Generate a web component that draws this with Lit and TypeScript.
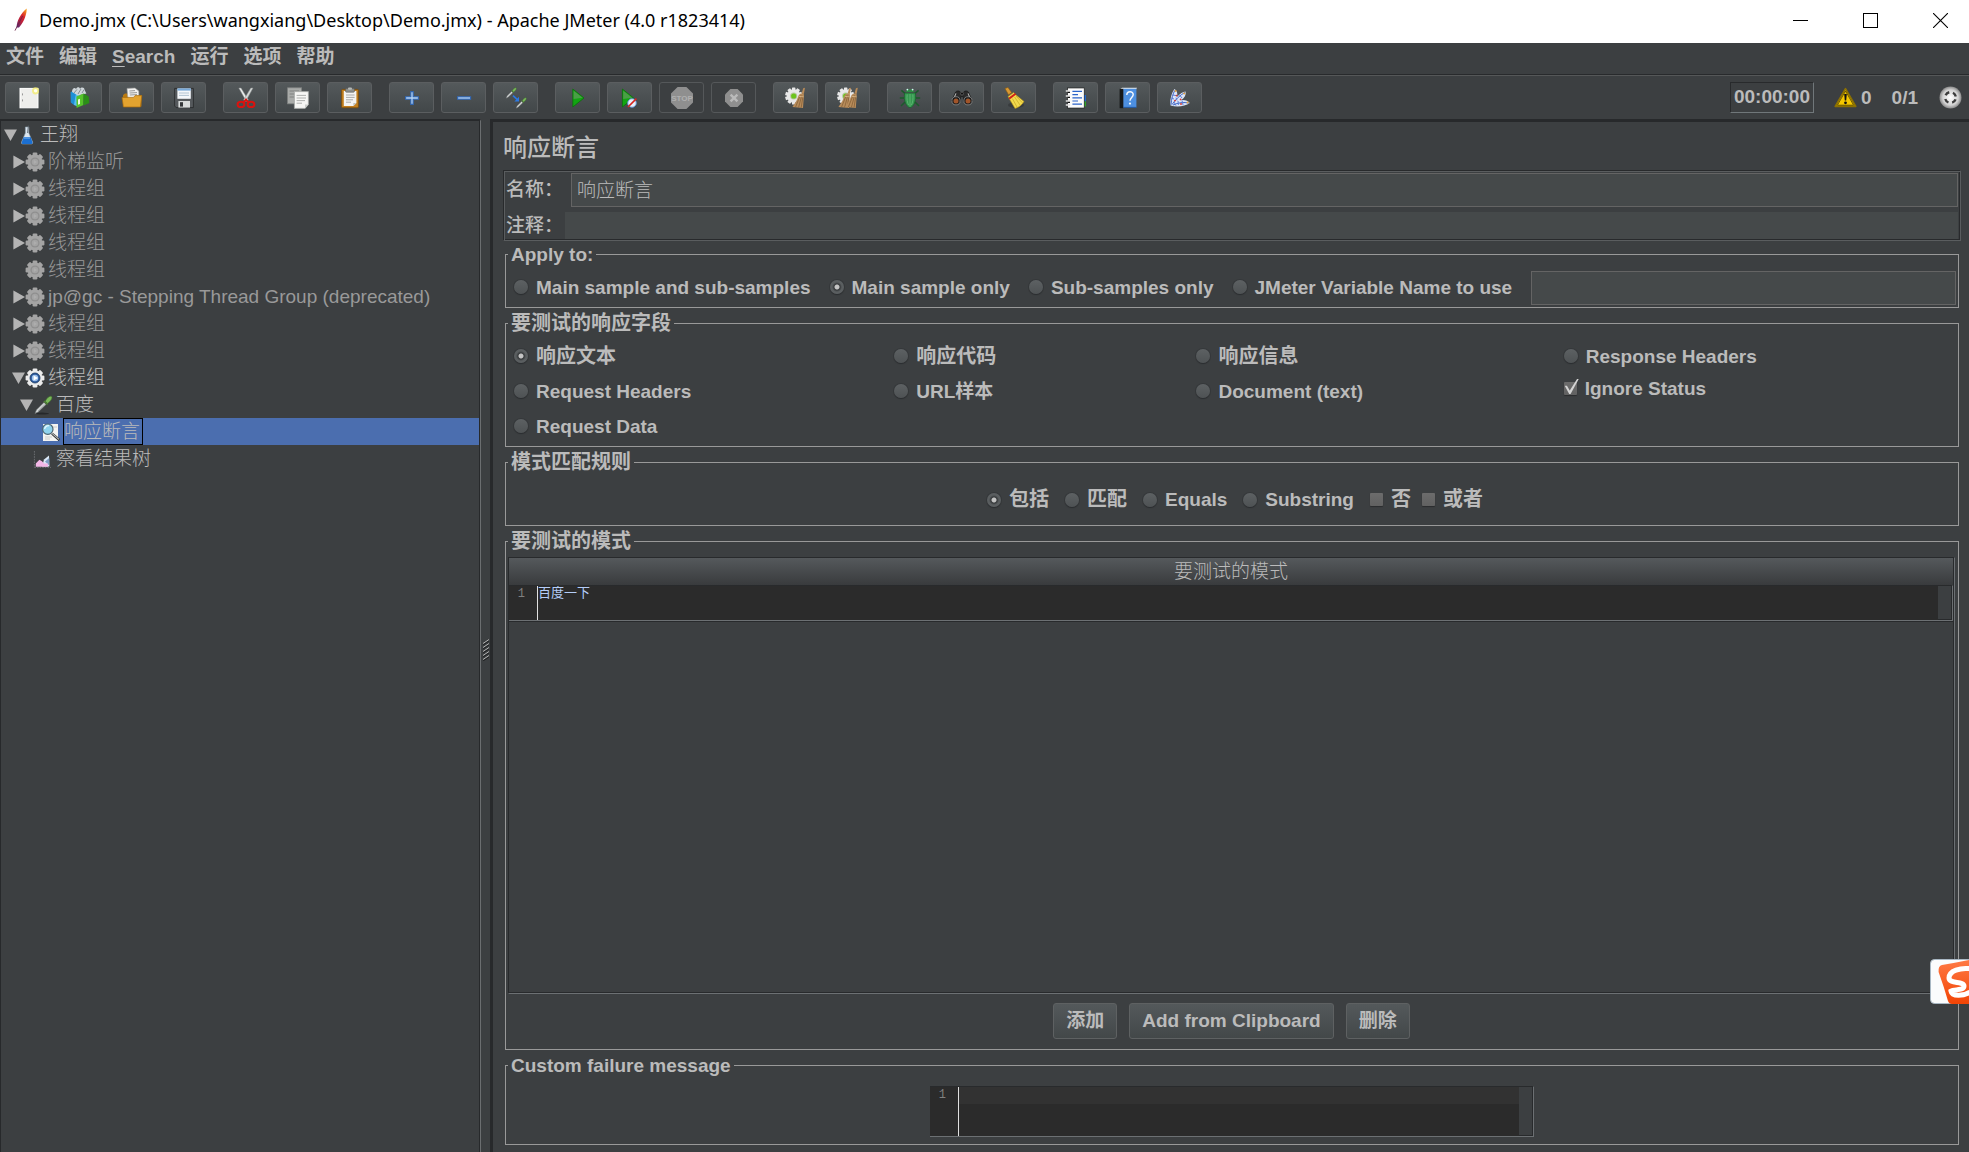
import { LitElement, html, svg, css, nothing, TemplateResult } from "lit";
import { customElement, state } from "lit/decorators.js";
import { classMap } from "lit/directives/class-map.js";

const gearTeeth = Array.from({ length: 10 }, (_, i) => i * 36);

const gear = (cls: string, play: boolean) => svg`
  <g class=${cls}>
    ${gearTeeth.filter((_, i) => i < 8).map((_, i) => svg`<rect x="7.6" y="0.6" width="4.8" height="4.4" rx="1.2" transform="rotate(${i * 45} 10 10)"></rect>`)}
    <circle cx="10" cy="10" r="7.4"></circle>
  </g>
  ${play
    ? svg`<circle cx="10" cy="10" r="5" fill="#2c5a9e" stroke="#17365f" stroke-width="0.8"></circle>
        <circle cx="10" cy="10" r="3.2" fill="#9cc0ea"></circle>
        <path d="M8.6 7.4 L13 10 L8.6 12.6 Z" fill="#ffffff"></path>`
    : svg`<circle cx="10" cy="10" r="4.6" fill="#8f8f8f"></circle>
        <circle cx="10" cy="10" r="3.2" fill="#a3a3a3"></circle>
        <path d="M8.8 8 L12 10 L8.8 12 Z" fill="#adadad"></path>`}`;

const dropper = svg`
  <path d="M2 18.6 L3.4 15 L11 7.4 L13 9.4 L5.4 16.8 Z" fill="#e9ecec" stroke="#6a6e6e" stroke-width="0.7"></path>
  <path d="M4.6 16.2 L11.4 9.2" stroke="#8c9292" stroke-width="0.9"></path>
  <path d="M10.4 6.4 L14 10 L15 9 L11.4 5.4 Z" fill="#4d7f34"></path>
  <path d="M12.2 6.2 C13.5 3.5 16 0.8 18.2 1.2 C19.8 2 19 5 14.6 8.4 Z" fill="#79b75a" stroke="#3f7228" stroke-width="0.6"></path>`;

const wheel = svg`
  ${gearTeeth.map((a) => svg`<rect x="7" y="0.4" width="3.4" height="4.4" rx="0.6" fill="#e8e8e8" transform="rotate(${a} 8.7 9)"></rect>`)}
  <circle cx="8.7" cy="9" r="6.8" fill="#e8e8e8"></circle>
  <circle cx="8.7" cy="9" r="3.6" fill="#b9c7a4"></circle>
  <circle cx="8.7" cy="9" r="2.6" fill="#6cc41c"></circle>`;

const broomStick = (dx: number) => svg`
  <g transform="translate(${dx} 0)">
    <path d="M18.2 1.2 L20 0.8 L18.8 7 L16.6 6.4 Z" fill="#b98b58"></path>
    <path d="M13.8 8 C15.6 6.2 18 6.2 19 7.6 L18 21 L7.4 20 Q12 14 13.8 8 Z" fill="#b88c5b"></path>
    <path d="M15.2 8.4 L10.6 20 M16.8 8.4 L13.6 20.4 M18 9 L16.2 20.6" stroke="#7f5a32" stroke-width="0.7" fill="none"></path>
    <path d="M14 9.4 L18.8 9.8" stroke="#e0bd8d" stroke-width="0.8"></path>
  </g>`;

const TOOL_ICONS: Record<string, TemplateResult> = {
  new: svg`
    <rect x="3" y="1.4" width="18" height="19.4" fill="#eeeeec" stroke="#ffffff" stroke-width="1"></rect>
    <rect x="5" y="6.4" width="1" height="2" fill="#999"></rect><rect x="5" y="12.4" width="1" height="2" fill="#999"></rect>
    <circle cx="18.6" cy="3.8" r="3.6" fill="#f4ec6a" opacity="0.75"></circle><circle cx="18.6" cy="3.8" r="1.7" fill="#fffff0"></circle>`,
  templates: svg`
    <path d="M1.6 5 L7 3.4 L7 17 L5 18 L1.8 15.6 Z" fill="#1e90d6"></path><path d="M7 6 L12 8 L9.6 20 L5 18 Z" fill="#59bdf2"></path>
    <path d="M3 5 C3 1 6 0 7 2 C8 -0.6 11 0 11 2 C12 -0.2 15.6 0 15.6 3 L17.4 6.6 L9 8.6 Z" fill="#cfd6da"></path>
    <path d="M5 6 L8 2.4 M9 7 L12 2 M13 6 L15 2.6" stroke="#7d878d" stroke-width="0.9"></path>
    <path d="M7.4 9.6 L14.6 6.4 L14.4 18 L7.6 21 Z" fill="#55c42a"></path><path d="M14.6 6.4 L19.6 9.4 L20.4 16 L14.4 18.4 Z" fill="#2b8f17"></path>
    <path d="M9 12.6 L11 11.8 V17 L9 17.8 Z" fill="#e9f7df"></path>`,
  open: svg`
    <path d="M2 8 L4 6.4 L8 6.4 L9 8 L20.4 8 L20.4 19.6 L2 19.6 Z" fill="#b97a12"></path>
    <path d="M6 1.4 L14 1 L17.8 4 L18 13 L7 13 Z" fill="#f2f2f0" stroke="#9b9b98" stroke-width="0.6"></path>
    <path d="M8.4 4 L14 3.6 M8.6 6 L16 5.6 M8.8 8 L16 7.6" stroke="#8c8c8c" stroke-width="0.9"></path>
    <path d="M1 10.4 L12.6 10.4 L14 8.6 L20.8 8.6 L19.4 20 L2.4 20 Z" fill="#e3a32f" stroke="#a96c0b" stroke-width="0.7"></path>`,
  save: svg`
    <path d="M1.6 1.4 L20.4 1.4 L20.4 20.6 L3.2 20.6 L1.6 19 Z" fill="#55595c" stroke="#2a2c2e" stroke-width="0.9"></path>
    <rect x="4.4" y="1.4" width="13.4" height="10.4" fill="#f4f7fa"></rect><rect x="4.4" y="1.4" width="13.4" height="2.2" fill="#78a9d8"></rect>
    <path d="M6 6 H16 M6 8.4 H16" stroke="#a9bccd" stroke-width="0.9"></path>
    <rect x="5.4" y="14" width="11.6" height="6.6" fill="#d9dcdc"></rect><rect x="7" y="15.2" width="3" height="4.4" fill="#34373a"></rect>`,
  cut: svg`
    <path d="M3.8 1 L6 1 L13.4 13 L11.4 14.6 Z" fill="#e9eceb" stroke="#8b8f8f" stroke-width="0.5"></path>
    <path d="M18 1 L15.8 1 L8.6 13 L10.6 14.6 Z" fill="#d5d9d8" stroke="#8b8f8f" stroke-width="0.5"></path>
    <ellipse cx="6" cy="17.4" rx="3.4" ry="2.6" fill="none" stroke="#d9130f" stroke-width="2"></ellipse>
    <ellipse cx="16" cy="17.4" rx="3.4" ry="2.6" fill="none" stroke="#d9130f" stroke-width="2"></ellipse>
    <path d="M8.4 15.6 L11 12.6 L13.6 15.6" fill="none" stroke="#d9130f" stroke-width="2"></path>`,
  copy: svg`
    <rect x="0.6" y="0.8" width="14" height="16" fill="#a9aba9" stroke="#7f8280" stroke-width="0.8"></rect>
    <path d="M2.6 4 H12 M2.6 7 H12 M2.6 10 H7" stroke="#7b7e7c" stroke-width="0.9"></path>
    <path d="M7.4 4.6 H21.4 V17.6 L18 21.4 H7.4 Z" fill="#f6f6f4" stroke="#a3a6a3" stroke-width="0.8"></path>
    <path d="M9.6 8.4 H19 M9.6 11 H19 M9.6 13.6 H18 M9.6 16.2 H15" stroke="#a5a7a5" stroke-width="0.9"></path>
    <path d="M21.4 17.6 H18 V21.4 Z" fill="#c9cbc9"></path>`,
  paste: svg`
    <rect x="2.6" y="2.4" width="16.8" height="18.4" rx="1" fill="#c27f1e" stroke="#7c4c09" stroke-width="0.8"></rect>
    <path d="M4.8 4 H17.4 V16 L14.4 19 H4.8 Z" fill="#f4f4f2"></path>
    <path d="M7 8 H15.6 M7 10.4 H15.6 M7 12.8 H14 M7 15.2 H12" stroke="#a0a2a0" stroke-width="0.9"></path>
    <path d="M17.4 16 H14.4 V19 Z" fill="#bdbfbd"></path>
    <rect x="6.6" y="1.6" width="8.8" height="3.6" rx="0.8" fill="#8d908d" stroke="#595b59" stroke-width="0.6"></rect><rect x="9" y="0.4" width="4" height="2.4" rx="1" fill="#b5b8b5"></rect>`,
  plus: svg`<path d="M9.8 4.6 H12.2 V9.8 H17.4 V12.2 H12.2 V17.4 H9.8 V12.2 H4.6 V9.8 H9.8 Z" fill="#b4d3f5" stroke="#2f65b3" stroke-width="1.1"></path>`,
  minus: svg`<rect x="4.6" y="9.8" width="13" height="2.4" fill="#b4d3f5" stroke="#2f65b3" stroke-width="1.1"></rect>`,
  toggle: svg`
    <g transform="translate(0 0) scale(0.6)">${dropper}</g><g transform="translate(10 10) scale(0.6)">${dropper}</g>
    <path d="M8 8.6 L12.4 12.6" stroke="#2b78e4" stroke-width="1.6"></path><path d="M14 9.8 V14.4 H9.4 Z" fill="#2b78e4"></path>`,
  start: svg`<path d="M5.8 2 L17 11 L5.8 20 Z" fill="#12a512" stroke="#0c6e0c" stroke-width="0.8"></path><path d="M6.6 3.8 L15.6 10.8 L6.6 12 Z" fill="#4a9e46"></path>`,
  startNoPause: svg`
    <path d="M3.4 2 L14.6 11 L3.4 20 Z" fill="#12a512" stroke="#0c6e0c" stroke-width="0.8"></path><path d="M4.2 3.8 L13.2 10.8 L4.2 12 Z" fill="#4a9e46"></path>
    <circle cx="13" cy="16" r="4.3" fill="#e8f0fa" stroke="#5d8fcd" stroke-width="1"></circle><path d="M9 20 L17.4 11.6" stroke="#d8231d" stroke-width="1.6"></path>`,
  stop: svg`<path d="M6.6 0 H15.4 L22 6.6 V15.4 L15.4 22 H6.6 L0 15.4 V6.6 Z" fill="#8f8f8f"></path>
    <text x="11" y="14" text-anchor="middle" class="stop-word">STOP</text>`,
  shutdown: svg`<path d="M7.4 2 H14.6 L20 7.4 V14.6 L14.6 20 H7.4 L2 14.6 V7.4 Z" fill="#8f8f8f"></path>
    <path d="M7.6 7.6 L14.4 14.4 M14.4 7.6 L7.6 14.4" stroke="#bababa" stroke-width="2.4"></path>`,
  clear: svg`${wheel}${broomStick(0)}`,
  clearAll: svg`${wheel}${broomStick(-6)}${broomStick(0.8)}`,
  bug: svg`
    <path d="M6 6.4 L2.4 3.4 M16 6.4 L19.6 3.4 M5.4 11 H0.8 M16.6 11 H21.2 M6 15 L2 19 M16 15 L20 19" stroke="#1c5a2b" stroke-width="1.5" fill="none"></path>
    <path d="M7 5 C7 1.4 15 1.4 15 5 Z" fill="#2d8a44"></path><circle cx="8.4" cy="2.6" r="0.9" fill="#cfe"></circle><circle cx="13.6" cy="2.6" r="0.9" fill="#cfe"></circle>
    <path d="M5.6 6 H16.4 C17.6 14 14.6 20 11 20.6 C7.4 20 4.4 14 5.6 6 Z" fill="#34994f" stroke="#1c5f2e" stroke-width="0.8"></path>
    <path d="M11 7 V19.6 M8.2 7.4 C7.6 12 8.4 16 9.6 18 M13.8 7.4 C14.4 12 13.6 16 12.4 18" stroke="#67b87a" stroke-width="0.8" fill="none"></path>`,
  search: svg`
    <path d="M4.6 5 C6 3.4 8.6 3.6 9.4 5.4 L12.6 5.4 C13.4 3.6 16 3.4 17.4 5 L21.4 14 L13 15 L12 9.4 H10 L9 15 L0.6 14 Z" fill="#2b2b2b" stroke="#111" stroke-width="0.6"></path>
    <path d="M5 6.4 L3 11 M17 6.4 L19 11" stroke="#b4b4b4" stroke-width="1.1"></path><circle cx="11" cy="6.6" r="1.5" fill="#111" stroke="#777" stroke-width="0.6"></circle>
    <circle cx="5" cy="13.8" r="4.1" fill="#1c1c1c" stroke="#8c8c8c" stroke-width="0.8"></circle><circle cx="17" cy="13.8" r="4.1" fill="#1c1c1c" stroke="#8c8c8c" stroke-width="0.8"></circle>
    <circle cx="5" cy="14" r="2.5" fill="#a1552a"></circle><circle cx="17" cy="14" r="2.5" fill="#a1552a"></circle>`,
  reset: svg`
    <ellipse cx="13" cy="18" rx="8" ry="3" fill="#2a2c2d" opacity="0.5"></ellipse>
    <path d="M2 1.6 L5 0.4 L8.6 5.6 L5.6 7.8 Z" fill="#d99a34" stroke="#8f5d10" stroke-width="0.6"></path>
    <path d="M5 9.6 L10.6 5.4 L13.6 8.4 L21 14.4 C19 18 15.4 20.6 12 21.4 L7 13 Z" fill="#f2d94e" stroke="#b08f14" stroke-width="0.6"></path>
    <path d="M9.4 11.6 L14 20 M11.6 10 L17 18 M13 9 L19.4 15.8" stroke="#c6a622" stroke-width="0.7"></path>
    <path d="M5.6 10.8 L12 6 L13.2 7.4 L6.6 12.4 Z" fill="#cf2118"></path>`,
  functions: svg`
    <rect x="15" y="8" width="6" height="6.6" fill="#2068cf"></rect><rect x="15" y="14.4" width="6" height="5" fill="#2e9f28"></rect>
    <rect x="2.6" y="1" width="16.6" height="20" fill="#fbfbfb" stroke="#111" stroke-width="0.6"></rect>
    <path d="M7.4 4.4 H17 M7.4 7.6 H13 M7.4 10.8 H17 M7.4 14 H13 M7.4 17.2 H17" stroke="#2a63c9" stroke-width="1.2"></path>
    <path d="M0.8 4 H5 M0.8 9 H5 M0.8 14 H5 M0.8 18 H5" stroke="#e2e2e2" stroke-width="1.6"></path><path d="M2.8 5.4 H5 M2.8 10.4 H5 M2.8 15.4 H5" stroke="#111" stroke-width="1.2"></path>`,
  help: svg`
    <path d="M2.6 2.4 L5 0.8 H20 L19 2.4 Z" fill="#dfe5ea"></path><rect x="2.6" y="1.8" width="4" height="19.4" fill="#17191b"></rect>
    <rect x="6.4" y="1.8" width="13" height="18.6" fill="#4d8fe0"></rect><path d="M6.4 20.4 H19.4" stroke="#2359a3" stroke-width="1"></path>
    <path d="M9.8 8 C9.8 3.6 16.4 3.6 16.2 7.8 C16 10.4 13 10.8 13 13.8" fill="none" stroke="#f2f7fd" stroke-width="1.5"></path><circle cx="13" cy="16.6" r="1.1" fill="#f2f7fd"></circle>`,
  sourceTree: svg`
    <path d="M1.6 18.4 C0.6 13 2.6 6 5.4 2 C8.4 4 8.8 7 8 10 C11 6.6 14 4.8 16.6 4.6 C17.2 8 15.6 11 12.4 13 C16 12.6 19 13.6 20.8 16 C16 19.4 8 20.4 1.6 18.4 Z" fill="#dbe4f7"></path>
    <path d="M2 17.6 C2.4 12 4 6.6 5.8 3.4 M3 17.6 C6 13 11 8 16 5.4 M4 18 C9 15.6 15 15 20 16" stroke="#3f66c4" stroke-width="1" fill="none"></path>
    <path d="M2.4 11 L5 12 M3.6 8 L7.4 8.6 M7 10.6 L8 13.4 M10.4 7.8 L13 11 M9 14 L9.4 18 M13 13.4 L14 18 M5 15 L7 18.6" stroke="#5c7fd6" stroke-width="1"></path>
    <circle cx="6.6" cy="4" r="1" fill="#e8a33a"></circle><circle cx="15.2" cy="6.6" r="1" fill="#e8a33a"></circle><circle cx="18.6" cy="15.4" r="1" fill="#e8a33a"></circle>
    <circle cx="7.6" cy="8.6" r="0.9" fill="#d8372e"></circle><circle cx="11.6" cy="12.4" r="0.9" fill="#d8372e"></circle><circle cx="12" cy="17" r="0.9" fill="#d8372e"></circle><circle cx="6" cy="13.6" r="0.9" fill="#d8372e"></circle>`,
};

const TREE_ICONS: Record<string, TemplateResult> = {
  plan: svg`
    <path d="M8.4 2 H11.8 V8 L15.6 17 C16 18.6 15 19 14 19 H6 C5 19 4 18.6 4.6 17 L8.4 8 Z" fill="#dce6ef" stroke="#8fa1b0" stroke-width="0.6"></path>
    <path d="M6.8 12 H13.6 L15.4 17 C15.8 18.4 15 19 14 19 H6 C5 19 4.4 18.4 4.8 17 Z" fill="#1b6fd1"></path>
    <path d="M7 13 H13" stroke="#7fb5ee" stroke-width="1"></path><path d="M11.4 0.6 L10.6 8" stroke="#59636b" stroke-width="0.9"></path>`,
  gearOff: gear("gear-off", false),
  gearOn: gear("gear-on", true),
  sampler: svg`<ellipse cx="9" cy="18.6" rx="7" ry="1" fill="#26282a"></ellipse>${dropper}`,
  assertion: svg`
    <rect x="2" y="2" width="15" height="17" fill="#f4f4f2"></rect><path d="M12 5 H16 M4 15 H11 M4 17 H9" stroke="#c9c9c6" stroke-width="0.9"></path>
    <path d="M11 11.6 L18.4 18" stroke="#2b2d2e" stroke-width="2.4"></path><path d="M11 11.4 L18 17.4" stroke="#b9bdbd" stroke-width="1.1"></path>
    <circle cx="6.8" cy="7.2" r="5.2" fill="#8fd3ee" stroke="#4f6571" stroke-width="1.2"></circle><path d="M3.6 7 C4 4.6 6 3.4 8 3.8" stroke="#e6f8ff" stroke-width="1.3" fill="none"></path>`,
  results: svg`
    <path d="M1.4 2 V18.4 M1.4 18.4 H18" stroke="#6f7376" stroke-width="0.9" stroke-dasharray="1.6 1"></path>
    <path d="M9 17.6 L11 10.4 L16 6.6 L16.4 17.6 Z" fill="#dce9f6"></path><path d="M12 12.6 L16.2 9 V16.6 Z" fill="#7d9cc4"></path>
    <path d="M2.8 17.8 V14.4 L6.4 10.8 L9 12.2 L11 14.6 H15 V17.8 Z" fill="#f2b6e6"></path>`,
};

interface Node { id: string; text: string; depth: number; icon: string; open?: boolean; off?: boolean }

const NODES: Node[] = [
  { id: "n0", text: "王翔", depth: 0, icon: "plan", open: true },
  { id: "n1", text: "阶梯监听", depth: 1, icon: "gearOff", open: false, off: true },
  { id: "n2", text: "线程组", depth: 1, icon: "gearOff", open: false, off: true },
  { id: "n3", text: "线程组", depth: 1, icon: "gearOff", open: false, off: true },
  { id: "n4", text: "线程组", depth: 1, icon: "gearOff", open: false, off: true },
  { id: "n5", text: "线程组", depth: 1, icon: "gearOff", off: true },
  { id: "n6", text: "jp@gc - Stepping Thread Group (deprecated)", depth: 1, icon: "gearOff", open: false, off: true },
  { id: "n7", text: "线程组", depth: 1, icon: "gearOff", open: false, off: true },
  { id: "n8", text: "线程组", depth: 1, icon: "gearOff", open: false, off: true },
  { id: "n9", text: "线程组", depth: 1, icon: "gearOn", open: true },
  { id: "n10", text: "百度", depth: 2, icon: "sampler", open: true },
  { id: "n11", text: "响应断言", depth: 3, icon: "assertion" },
  { id: "n12", text: "察看结果树", depth: 2, icon: "results" },
];

const TOOLS: [string, string][][] = [
  [["new", "New"], ["templates", "Templates"], ["open", "Open"], ["save", "Save"]],
  [["cut", "Cut"], ["copy", "Copy"], ["paste", "Paste"]],
  [["plus", "Expand all"], ["minus", "Collapse all"], ["toggle", "Toggle"]],
  [["start", "Start"], ["startNoPause", "Start no pauses"], ["stop", "Stop"], ["shutdown", "Shutdown"]],
  [["clear", "Clear"], ["clearAll", "Clear all"]],
  [["bug", "Debug"], ["search", "Search"], ["reset", "Reset search"]],
  [["functions", "Function helper"], ["help", "Help"], ["sourceTree", "What's this node"]],
];

@customElement("app-root")
export class AppRoot extends LitElement {
  @state() private selected = "n11";

  static styles = css`
    :host {
      display: flex;
      flex-direction: column;
      position: relative;
      min-height: 100vh;
      overflow: hidden;
      background: #3c3f41;
      color: #bbbbbb;
      font: 19px/23px "Liberation Sans", "Noto Sans CJK SC", sans-serif;
    }
    * { box-sizing: border-box; }
    button, input, textarea { font: inherit; color: inherit; margin: 0; }
    svg { display: block; flex: none; }

    .titlebar { display: flex; align-items: center; height: 43px; padding-left: 10px; background: #ffffff; color: #000000; }
    .app-name { flex: 1; margin: 0 0 4px 7px; font: 18px/24px "Noto Sans", "Open Sans", sans-serif; white-space: nowrap; }
    .win { display: flex; align-items: center; justify-content: center; width: 70px; height: 43px; padding: 0 0 2px; border: 0; background: none; }
    .win:last-child { width: 64px; padding-left: 7px; }

    .menubar { display: flex; gap: 15px; height: 32px; padding: 1px 6px 0; border-bottom: 1px solid #282a2c; }
    .menubar button { height: 26px; padding: 0; border: 0; background: none; font-weight: bold; line-height: 24px; }
    .menubar u { text-underline-offset: 3px; }

    .toolbar { display: flex; align-items: center; height: 44px; padding: 0 7px 0 5px; border-top: 1px solid #555758; }
    .group { display: flex; gap: 7px; margin-right: 17px; }
    .tool { display: flex; align-items: center; justify-content: center; width: 45px; height: 31px; padding: 0; border: 1px solid #5b5e60; border-radius: 3px; background: linear-gradient(#54595b, #424749); }
    .tool:disabled { background: none; border-color: #55585a; }
    .stop-word { font: bold 8px "Liberation Sans", sans-serif; fill: #b0b0b0; }
    .status { display: flex; align-items: center; margin-left: auto; font-weight: bold; }
    .timer { height: 31px; padding: 2px 3px 0; border: 1px solid #282a2c; border-right-color: #70777a; border-bottom-color: #70777a; line-height: 24px; }
    .warn { display: flex; align-items: center; gap: 4px; margin: 0 20px; padding: 0; border: 0; background: none; font-weight: bold; }
    .threads { margin-right: 21px; }

    .body { display: flex; flex: 1; }
    .tree { width: 481px; flex: none; border: solid; border-width: 2px 1px 0 1px; border-color: #27292b #6b6e70 #27292b #27292b; box-shadow: inset -1px 0 #27292b; }
    .tree ul { margin: 0; padding: 0 1px 0 0; list-style: none; }
    .node { display: flex; align-items: center; width: 100%; height: 27px; padding: 0; border: 0; background: none; text-align: left; }
    .depth-0 { padding-left: 3px; }
    .depth-1 { padding-left: 11px; }
    .depth-2 { padding-left: 19px; }
    .depth-3 { padding-left: 27px; }
    .node-text { height: 27px; margin-left: 2px; padding-right: 2px; border: 1px solid transparent; line-height: 25px; font-weight: 300; white-space: nowrap; }
    .off { color: #999999; }
    .selected { background: #4b6eaf; }
    .selected .node-text { border-color: #000000; }
    .gear-off { fill: #a4a4a4; }
    .gear-on { fill: #ececec; }

    .splitter { display: flex; align-items: center; justify-content: center; width: 9px; flex: none; padding-top: 28px; }
    .panel { display: flex; flex-direction: column; flex: 1; min-width: 0; padding: 12px 8px 7px 10px; border: solid #27292b; border-width: 3px 0 0 3px; }
    h1 { margin: 0 0 12px; font: 500 24px/24px "Noto Sans CJK SC", sans-serif; }

    .form { display: grid; grid-template-columns: 57px 1fr; align-items: center; margin-bottom: 2px; border: 1px solid #282a2c; border-right-color: #5a5d5f; border-bottom-color: #5a5d5f; box-shadow: inset 1px 1px #5a5d5f, inset -1px -1px #282a2c; padding: 2px 2px 1px; font-weight: 500; }
    .form label { padding-bottom: 2px; white-space: nowrap; }
    .form input + label { padding: 4px 0 0; }
    .form input, .variable { height: 34px; border: 1px solid #646464; background: #45494a; padding: 0 5px 3px; border-radius: 0; font-weight: 300; outline: none; min-width: 0; }
    .form .name { margin-left: 8px; }
    .form .comment { height: 27px; margin-top: 5px; margin-left: 2px; border: 0; }

    fieldset { min-width: 0; margin: 0 2px 4px; padding: 0 2px 2px 8px; border: 1px solid #999999; font-weight: bold; }
    legend { margin-left: -6px; padding: 0 3px; line-height: 23px; }
    .han { font-size: 20px; }
    .choice { display: flex; align-items: center; gap: 8px; white-space: nowrap; }
    input[type="radio"], input[type="checkbox"] { appearance: none; flex: none; position: relative; width: 14px; height: 14px; margin: 0; border-radius: 50%; background: linear-gradient(#5d6163, #4e5254); box-shadow: 0 1px 1px #2c2e30, 0 0 0 1px #36393b; }
    input[type="radio"]:checked { background: radial-gradient(circle, #c4c4c4 0 2px, #35383a 3px, #5a5e60 5px); }
    input[type="checkbox"] { width: 13px; height: 13px; border-radius: 1px; background: linear-gradient(#6c6c6c, #616161); box-shadow: 0 1px 1px #2a2c2e; }
    input[type="checkbox"]:checked::before { content: ""; position: absolute; left: 1px; top: -3px; width: 14px; height: 15px; background: #d4d4d4; clip-path: polygon(0 45%, 16% 45%, 36% 76%, 88% 0, 100% 0, 42% 100%, 32% 100%); }

    .apply { display: flex; gap: 19px; padding-top: 5px; }
    .apply .choice { height: 32px; }
    .variable { flex: 1; }
    .fields { display: grid; grid-template-columns: 380fr 302fr 367fr 392fr; padding-top: 4px; }
    .fields .choice { height: 34px; margin-bottom: 1px; }
    .fields .short { height: 29px; }
    .rules { display: flex; justify-content: center; gap: 16px; padding: 14px 0 12px; }
    .pair { display: flex; gap: 11px; }
    .rules .choice { height: 23px; }

    .patterns { display: flex; flex: 1; flex-direction: column; padding: 4px 3px 10px 2px; }
    .patterns legend { margin-left: 0; }
    .scroll { flex: 1; border: 1px solid #282a2c; border-right-color: #6c7073; border-bottom-color: #6c7073; box-shadow: inset -1px -1px #282a2c; padding: 0 1px 1px 0; }
    table { width: 100%; border-collapse: collapse; }
    th { height: 27px; padding: 0; background: linear-gradient(#55595c, #393b3d); line-height: 26px; font-weight: 300; }
    td { padding: 0; border-bottom: 1px solid #282a2c; }
    .editor { display: flex; border: 1px solid #282a2c; border-left: 0; border-right-color: #6c7073; border-bottom-color: #6c7073; background: #2b2b2b; font: 13px/16px "Liberation Mono", "Noto Sans CJK SC", monospace; }
    .gutter { width: 28px; padding: 0 12px 0 0; color: #808080; text-align: right; font-size: 12px; }
    .editor textarea { flex: 1; min-width: 0; height: 34px; padding: 0; border: 0; border-left: 1px solid #e0e0e0; border-radius: 0; outline: none; resize: none; overflow: hidden; background: none; color: #b4cdf8; }
    .track { width: 14px; flex: none; background: #3c3f41; box-shadow: inset -1px -1px #282a2c; }
    .actions { display: flex; justify-content: center; gap: 12px; padding: 9px 0 0; }
    .actions button { height: 36px; padding: 0 12px 2px; border: 1px solid #5e6162; border-radius: 3px; background: linear-gradient(#54595b, #434849); font-weight: bold; }

    .message { display: flex; justify-content: center; margin-bottom: 0; padding: 9px 0 7px; }
    .message legend { margin-left: 2px; }
    .message .editor { width: 604px; }
    .message textarea { height: 49px; background: linear-gradient(#323232 0 17px, #2b2b2b 17px); }
    .ime { position: absolute; right: 0; top: 959px; width: 39px; height: 45px; padding: 0; border: 0; background: none; }
  `;

  private option(group: string, text: string, checked = false, type = "radio", extra = "") {
    const han = !/[A-Za-z]/.test(text);
    return html`<label class=${classMap({ choice: true, han, short: extra === "short" })}><input type=${type} name=${group} ?checked=${checked}>${text}</label>`;
  }

  private node(n: Node) {
    const arrow = n.open === undefined ? nothing
      : n.open ? svg`<path d="M0 1.4 H13 L6.5 13 Z" fill="#b4b4b4"></path>`
      : svg`<path d="M1.4 0.6 V13.4 L13 7 Z" fill="#b4b4b4"></path>`;
    return html`<li role="treeitem" aria-selected=${this.selected === n.id ? "true" : "false"}>
      <button class=${classMap({ node: true, ["depth-" + n.depth]: true, off: !!n.off, selected: this.selected === n.id })}
        @click=${() => { this.selected = n.id; }}>
        <svg width="13" height="14" viewBox="0 0 13 14">${arrow}</svg>
        <svg width="20" height="20" viewBox="0 0 20 20">${TREE_ICONS[n.icon]}</svg>
        <span class="node-text">${n.text}</span>
      </button></li>`;
  }

  render() {
    return html`
      <header class="titlebar">
        <svg width="22" height="28" viewBox="0 0 22 28">
          <defs><linearGradient id="quill" x1="0.8" y1="0" x2="0.2" y2="1"><stop offset="0" stop-color="#f79a1e"></stop><stop offset="0.35" stop-color="#d8262c"></stop><stop offset="0.7" stop-color="#b5203f"></stop><stop offset="1" stop-color="#5f2a70"></stop></linearGradient></defs>
          <path d="M16.6 0.6 C17 5 14.6 13.4 9 19.4 L6.6 19.4 C6.4 14 10.6 5.6 16.6 0.6 Z" fill="url(#quill)"></path>
          <path d="M12.6 8 L5 22.6" stroke="#6c2148" stroke-width="0.9"></path>
        </svg>
        <span class="app-name">Demo.jmx (C:\\Users\\wangxiang\\Desktop\\Demo.jmx) - Apache JMeter (4.0 r1823414)</span>
        <button class="win" aria-label="Minimize"><svg width="15" height="15" viewBox="0 0 15 15"><path d="M0 7.5 H15" stroke="#000"></path></svg></button>
        <button class="win" aria-label="Maximize"><svg width="15" height="15" viewBox="0 0 15 15"><rect x="0.5" y="0.5" width="14" height="14" fill="none" stroke="#000"></rect></svg></button>
        <button class="win" aria-label="Close"><svg width="15" height="15" viewBox="0 0 15 15"><path d="M0 0 L15 15 M15 0 L0 15" stroke="#000" stroke-width="1.1"></path></svg></button>
      </header>
      <nav class="menubar">
        <button>文件</button><button>编辑</button><button><u>S</u>earch</button><button>运行</button><button>选项</button><button>帮助</button>
      </nav>
      <div class="toolbar">
        ${TOOLS.map((g) => html`<div class="group">${g.map(([id, label]) => html`
          <button class="tool" aria-label=${label} ?disabled=${id === "stop" || id === "shutdown"}>
            <svg width="22" height="22" viewBox="0 0 22 22">${TOOL_ICONS[id]}</svg>
          </button>`)}</div>`)}
        <div class="status">
          <span class="timer">00:00:00</span>
          <button class="warn">
            <svg width="23" height="21" viewBox="0 0 23 21"><path d="M11.5 1.6 L21.8 19.4 H1.2 Z" fill="#f5c800" stroke="#8c7000" stroke-width="1.6" stroke-linejoin="round"></path><path d="M11.5 4 L19.6 18.2 H3.4 Z" fill="none" stroke="#3a3000" stroke-width="0.7"></path><path d="M10.2 7 H12.8 L12.2 13.6 H10.8 Z" fill="#111"></path><circle cx="11.5" cy="15.8" r="1.4" fill="#111"></circle></svg>
            0</button>
          <span class="threads">0/1</span>
          <svg width="23" height="23" viewBox="0 0 23 23">
            <defs><radialGradient id="orb"><stop offset="0" stop-color="#ffffff"></stop><stop offset="0.7" stop-color="#d2d2d2"></stop><stop offset="1" stop-color="#8a8a8a"></stop></radialGradient></defs>
            <circle cx="11.5" cy="11.5" r="11" fill="url(#orb)"></circle>
            <circle cx="11.5" cy="11.5" r="5.4" fill="none" stroke="#3c3c3c" stroke-width="2.4" stroke-dasharray="4.6 3.88" stroke-dashoffset="-1.94"></circle>
          </svg>
        </div>
      </div>
      <div class="body">
        <aside class="tree"><ul role="tree">${NODES.map((n) => this.node(n))}</ul></aside>
        <div class="splitter">
          <svg width="8" height="22" viewBox="0 0 8 22">
            ${[0, 4, 8, 12, 16].map((y) => svg`<path d="M1 ${y + 4.5} L7 ${y + 0.5}" stroke="#b0b0b0" stroke-width="1"></path><path d="M1 ${y + 6} L7 ${y + 2}" stroke="#1f2122" stroke-width="1"></path>`)}
          </svg>
        </div>
        <main class="panel">
          <h1>响应断言</h1>
          <div class="form">
            <label for="name">名称：</label><input id="name" class="name" type="text" value="响应断言">
            <label for="comment">注释：</label><input id="comment" class="comment" type="text">
          </div>
          <fieldset class="apply">
            <legend>Apply to:</legend>
            ${this.option("scope", "Main sample and sub-samples")}
            ${this.option("scope", "Main sample only", true)}
            ${this.option("scope", "Sub-samples only")}
            ${this.option("scope", "JMeter Variable Name to use")}
            <input class="variable" type="text" aria-label="JMeter Variable Name">
          </fieldset>
          <fieldset>
            <legend class="han">要测试的响应字段</legend>
            <div class="fields">
              ${this.option("field", "响应文本", true)}
              ${this.option("field", "响应代码")}
              ${this.option("field", "响应信息")}
              ${this.option("field", "Response Headers")}
              ${this.option("field", "Request Headers")}
              ${this.option("field", "URL样本")}
              ${this.option("field", "Document (text)")}
              ${this.option("ignore", "Ignore Status", true, "checkbox", "short")}
              ${this.option("field", "Request Data")}
            </div>
          </fieldset>
          <fieldset>
            <legend class="han">模式匹配规则</legend>
            <div class="rules">
              ${this.option("rule", "包括", true)}
              ${this.option("rule", "匹配")}
              ${this.option("rule", "Equals")}
              ${this.option("rule", "Substring")}
              <div class="pair">
                ${this.option("not", "否", false, "checkbox")}
                ${this.option("or", "或者", false, "checkbox")}
              </div>
            </div>
          </fieldset>
          <fieldset class="patterns">
            <legend class="han">要测试的模式</legend>
            <div class="scroll">
              <table>
                <thead><tr><th scope="col">要测试的模式</th></tr></thead>
                <tbody><tr><td>
                  <div class="editor"><span class="gutter">1</span><textarea aria-label="要测试的模式" .value=${"百度一下"}></textarea><span class="track"></span></div>
                </td></tr></tbody>
              </table>
            </div>
            <div class="actions"><button>添加</button><button>Add from Clipboard</button><button>删除</button></div>
          </fieldset>
          <fieldset class="message">
            <legend>Custom failure message</legend>
            <div class="editor"><span class="gutter">1</span><textarea aria-label="Custom failure message"></textarea><span class="track"></span></div>
          </fieldset>
        </main>
      </div>
      <button class="ime" aria-label="Input method">
        <svg width="39" height="45" viewBox="0 0 39 45">
          <defs><linearGradient id="flame" x1="0" y1="0" x2="0" y2="1"><stop offset="0" stop-color="#ff7a45"></stop><stop offset="1" stop-color="#f24405"></stop></linearGradient></defs>
          <rect x="0.5" y="0.5" width="44" height="44" rx="4" fill="#fbfcfd" stroke="#a9b8c4"></rect>
          <path d="M12 6 Q24 4 39 1 V45 H22 Q19 45 18 42 Q14 28 8.6 13 Q8 7 12 6 Z" fill="url(#flame)"></path>
          <path d="M42 10 C30 8 19 12 19 19 C19 25 34 22 34 27 C34 32 24 30 21 32 C22 38 34 37 40 33" fill="none" stroke="#ffffff" stroke-width="5"></path>
        </svg>
      </button>
    `;
  }
}
